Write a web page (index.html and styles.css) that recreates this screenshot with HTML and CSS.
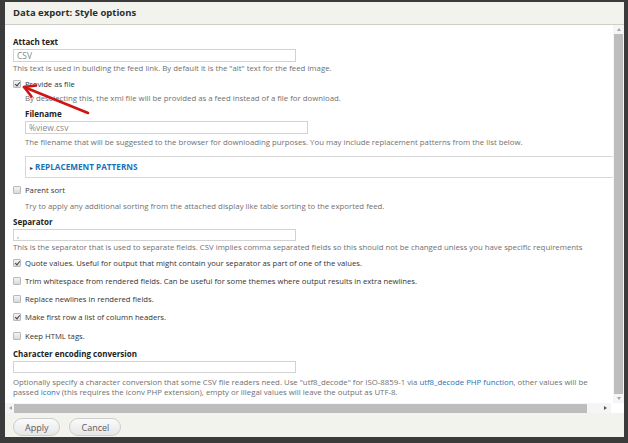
FILE: index.html
```html
<!DOCTYPE html>
<html lang="en">
<head>
  <meta charset="UTF-8" />
  <title>Data export: Style options</title>
  <link rel="stylesheet" href="styles.css">
</head>
<body>
  <div class="dialog">
    <div class="titlebar">Data export: Style options</div>

    <div class="viewport">
      <div class="pane">
        <div class="content">
          <div class="form-item">
            <label class="label">Attach text</label>
            <div class="text-input">CSV</div>
            <div class="desc">This text is used in building the feed link. By default it is the "alt" text for the feed image.</div>
          </div>

          <div class="form-item check-item">
            <div class="check-row"><span class="box checked"></span>Provide as file</div>
            <div class="desc indent">By deselecting this, the xml file will be provided as a feed instead of a file for download.</div>
          </div>

          <div class="form-item indent">
            <label class="label">Filename</label>
            <div class="text-input">%view.csv</div>
            <div class="desc loose">The filename that will be suggested to the browser for downloading purposes. You may include replacement patterns from the list below.</div>
          </div>

          <div class="fieldset indent">
            <span class="caret">&#9656;</span>REPLACEMENT PATTERNS
          </div>

          <div class="form-item check-item">
            <div class="check-row"><span class="box"></span>Parent sort</div>
            <div class="desc indent loose">Try to apply any additional sorting from the attached display like table sorting to the exported feed.</div>
          </div>

          <div class="form-item">
            <label class="label">Separator</label>
            <div class="text-input short">,</div>
            <div class="desc">This is the separator that is used to separate fields. CSV implies comma separated fields so this should not be changed unless you have specific requirements</div>
          </div>

          <div class="check-row solo"><span class="box checked"></span>Quote values. Useful for output that might contain your separator as part of one of the values.</div>
          <div class="check-row solo"><span class="box"></span>Trim whitespace from rendered fields. Can be useful for some themes where output results in extra newlines.</div>
          <div class="check-row solo"><span class="box"></span>Replace newlines in rendered fields.</div>
          <div class="check-row solo wide"><span class="box checked"></span>Make first row a list of column headers.</div>
          <div class="check-row solo"><span class="box"></span>Keep HTML tags.</div>

          <div class="form-item">
            <label class="label">Character encoding conversion</label>
            <div class="text-input short"></div>
            <div class="desc spaced">Optionally specify a character conversion that some CSV file readers need. Use "utf8_decode" for ISO-8859-1 via <a href="#">utf8_decode PHP function</a>, other values will be<br>passed <a href="#">iconv</a> (this requires the iconv PHP extension), empty or illegal values will leave the output as UTF-8.</div>
          </div>
        </div>

        <div class="vscroll">
          <span class="arrow-up"></span>
          <span class="vthumb"></span>
          <span class="arrow-down"></span>
        </div>
      </div>

      <div class="hscroll">
        <span class="arrow-left"></span>
        <span class="hthumb"></span>
        <span class="arrow-right"></span>
        <span class="corner"></span>
      </div>
    </div>

    <div class="buttons">
      <button class="btn">Apply</button>
      <button class="btn">Cancel</button>
    </div>

    <!-- red annotation arrow pointing at the checkbox -->
    <svg class="annotation" width="100" height="120" viewBox="0 0 100 120">
      <path d="M83 111 L19 85" stroke="#d01414" stroke-width="2.6" fill="none" stroke-linecap="round"/>
      <path d="M31 83.5 L19 85 L26.5 94.5" stroke="#d01414" stroke-width="2.6" fill="none" stroke-linecap="round" stroke-linejoin="round"/>
    </svg>
  </div>
</body>
</html>
```

FILE: styles.css
```css
body {
  margin: 0;
  background: #3b3b3b;
  font-family: "Open Sans", "DejaVu Sans", sans-serif;
  color: #333;
}
.dialog {
  position: relative;
  margin: 2px 4px 0 5px;
  height: 435px;
  background: #f3f3ee;
  display: flex;
  flex-direction: column;
}
.titlebar {
  height: 22px;
  line-height: 22px;
  padding-left: 8px;
  border-bottom: 1px solid #cfcfc8;
  font-size: 9.5px;
  font-weight: bold;
  color: #2d2d2d;
}
.viewport {
  height: 388px;
  display: flex;
  flex-direction: column;
  background: #fff;
}
.pane {
  height: 378px;
  display: flex;
}
.content {
  flex: 1;
  min-width: 0;
  overflow: hidden;
  display: flex;
  flex-direction: column;
  align-items: flex-start;
  padding: 12px 0 0 8px;
  font-size: 7.8px;
  line-height: 10px;
}
.form-item {
  display: flex;
  flex-direction: column;
  align-items: flex-start;
  margin-bottom: 6px;
}
.indent {
  margin-left: 12px;
}
.label {
  display: block;
  font-size: 8px;
  font-weight: bold;
  color: #222;
  margin-bottom: 2px;
}
.text-input {
  box-sizing: border-box;
  width: 283px;
  height: 13px;
  border: 1px solid #d2d2d2;
  padding-left: 3px;
  font-size: 8.5px;
  line-height: 11px;
  color: #8a8a8a;
}
.text-input.short {
  height: 12px;
  line-height: 10px;
}
.desc {
  margin-top: 1px;
  color: #707070;
  white-space: nowrap;
}
.desc.loose {
  margin-top: 3px;
}
.check-item .desc {
  margin-top: 4px;
}
.check-item .desc.loose {
  margin-top: 6px;
}
.desc.spaced {
  margin-top: 4px;
}
.desc a {
  color: #1a72b8;
  text-decoration: none;
}
.check-row {
  display: flex;
  align-items: center;
  height: 10px;
  font-size: 7.7px;
  color: #333;
  white-space: nowrap;
}
.check-row.solo {
  margin-bottom: 8px;
}
.check-row.solo.wide {
  margin-bottom: 9px;
}
.box {
  box-sizing: border-box;
  width: 8px;
  height: 8px;
  margin-right: 4px;
  border: 1px solid #b9b9b9;
  border-radius: 1px;
  background: linear-gradient(#f4f4f4, #d9d9d9);
  position: relative;
}
.box.checked::after {
  content: "";
  position: absolute;
  left: 2px;
  top: 0;
  width: 2px;
  height: 4px;
  border: solid #444;
  border-width: 0 1.5px 1.5px 0;
  transform: rotate(40deg);
}
.fieldset {
  box-sizing: border-box;
  flex: none;
  width: 600px;
  height: 22px;
  margin-top: 3px;
  margin-bottom: 7px;
  border: 1px solid #d8d8d8;
  padding-left: 4px;
  line-height: 20px;
  font-size: 8.2px;
  font-weight: bold;
  color: #1a72b8;
}
.caret {
  font-size: 6px;
  color: #333;
  margin-right: 2px;
}
.vscroll {
  width: 11px;
  display: flex;
  flex-direction: column;
  align-items: center;
  background: #f5f5f5;
}
.arrow-up,
.arrow-down {
  width: 0;
  height: 0;
  border-left: 2.5px solid transparent;
  border-right: 2.5px solid transparent;
  margin: 3px 0;
}
.arrow-up {
  border-bottom: 3px solid #a5a5a5;
}
.arrow-down {
  border-top: 3px solid #a5a5a5;
}
.vthumb {
  width: 9px;
  flex: 1;
  background: #bdbdbd;
}
.hscroll {
  height: 10px;
  display: flex;
  align-items: center;
  background: #f5f5f5;
}
.arrow-left,
.arrow-right {
  width: 0;
  height: 0;
  border-top: 2.5px solid transparent;
  border-bottom: 2.5px solid transparent;
}
.arrow-left {
  border-right: 3px solid #a5a5a5;
  margin: 0 2px 0 4px;
}
.arrow-right {
  border-left: 3px solid #555;
  margin: 0 4px 0 17px;
}
.hthumb {
  width: 573px;
  height: 9px;
  background: #bdbdbd;
}
.corner {
  flex: 1;
  align-self: stretch;
  background: #fff;
}
.buttons {
  flex: 1;
  display: flex;
  gap: 9px;
  padding: 5px 0 0 8px;
  align-items: flex-start;
}
.btn {
  height: 18px;
  padding: 0 11px;
  border: 1px solid #cdcdcd;
  border-radius: 10px;
  background: linear-gradient(#fbfbfb, #e6e6e6);
  font-family: "Open Sans", "DejaVu Sans", sans-serif;
  font-size: 9px;
  color: #5c5c5c;
}
.annotation {
  position: absolute;
  left: 0;
  top: 0;
}
```
